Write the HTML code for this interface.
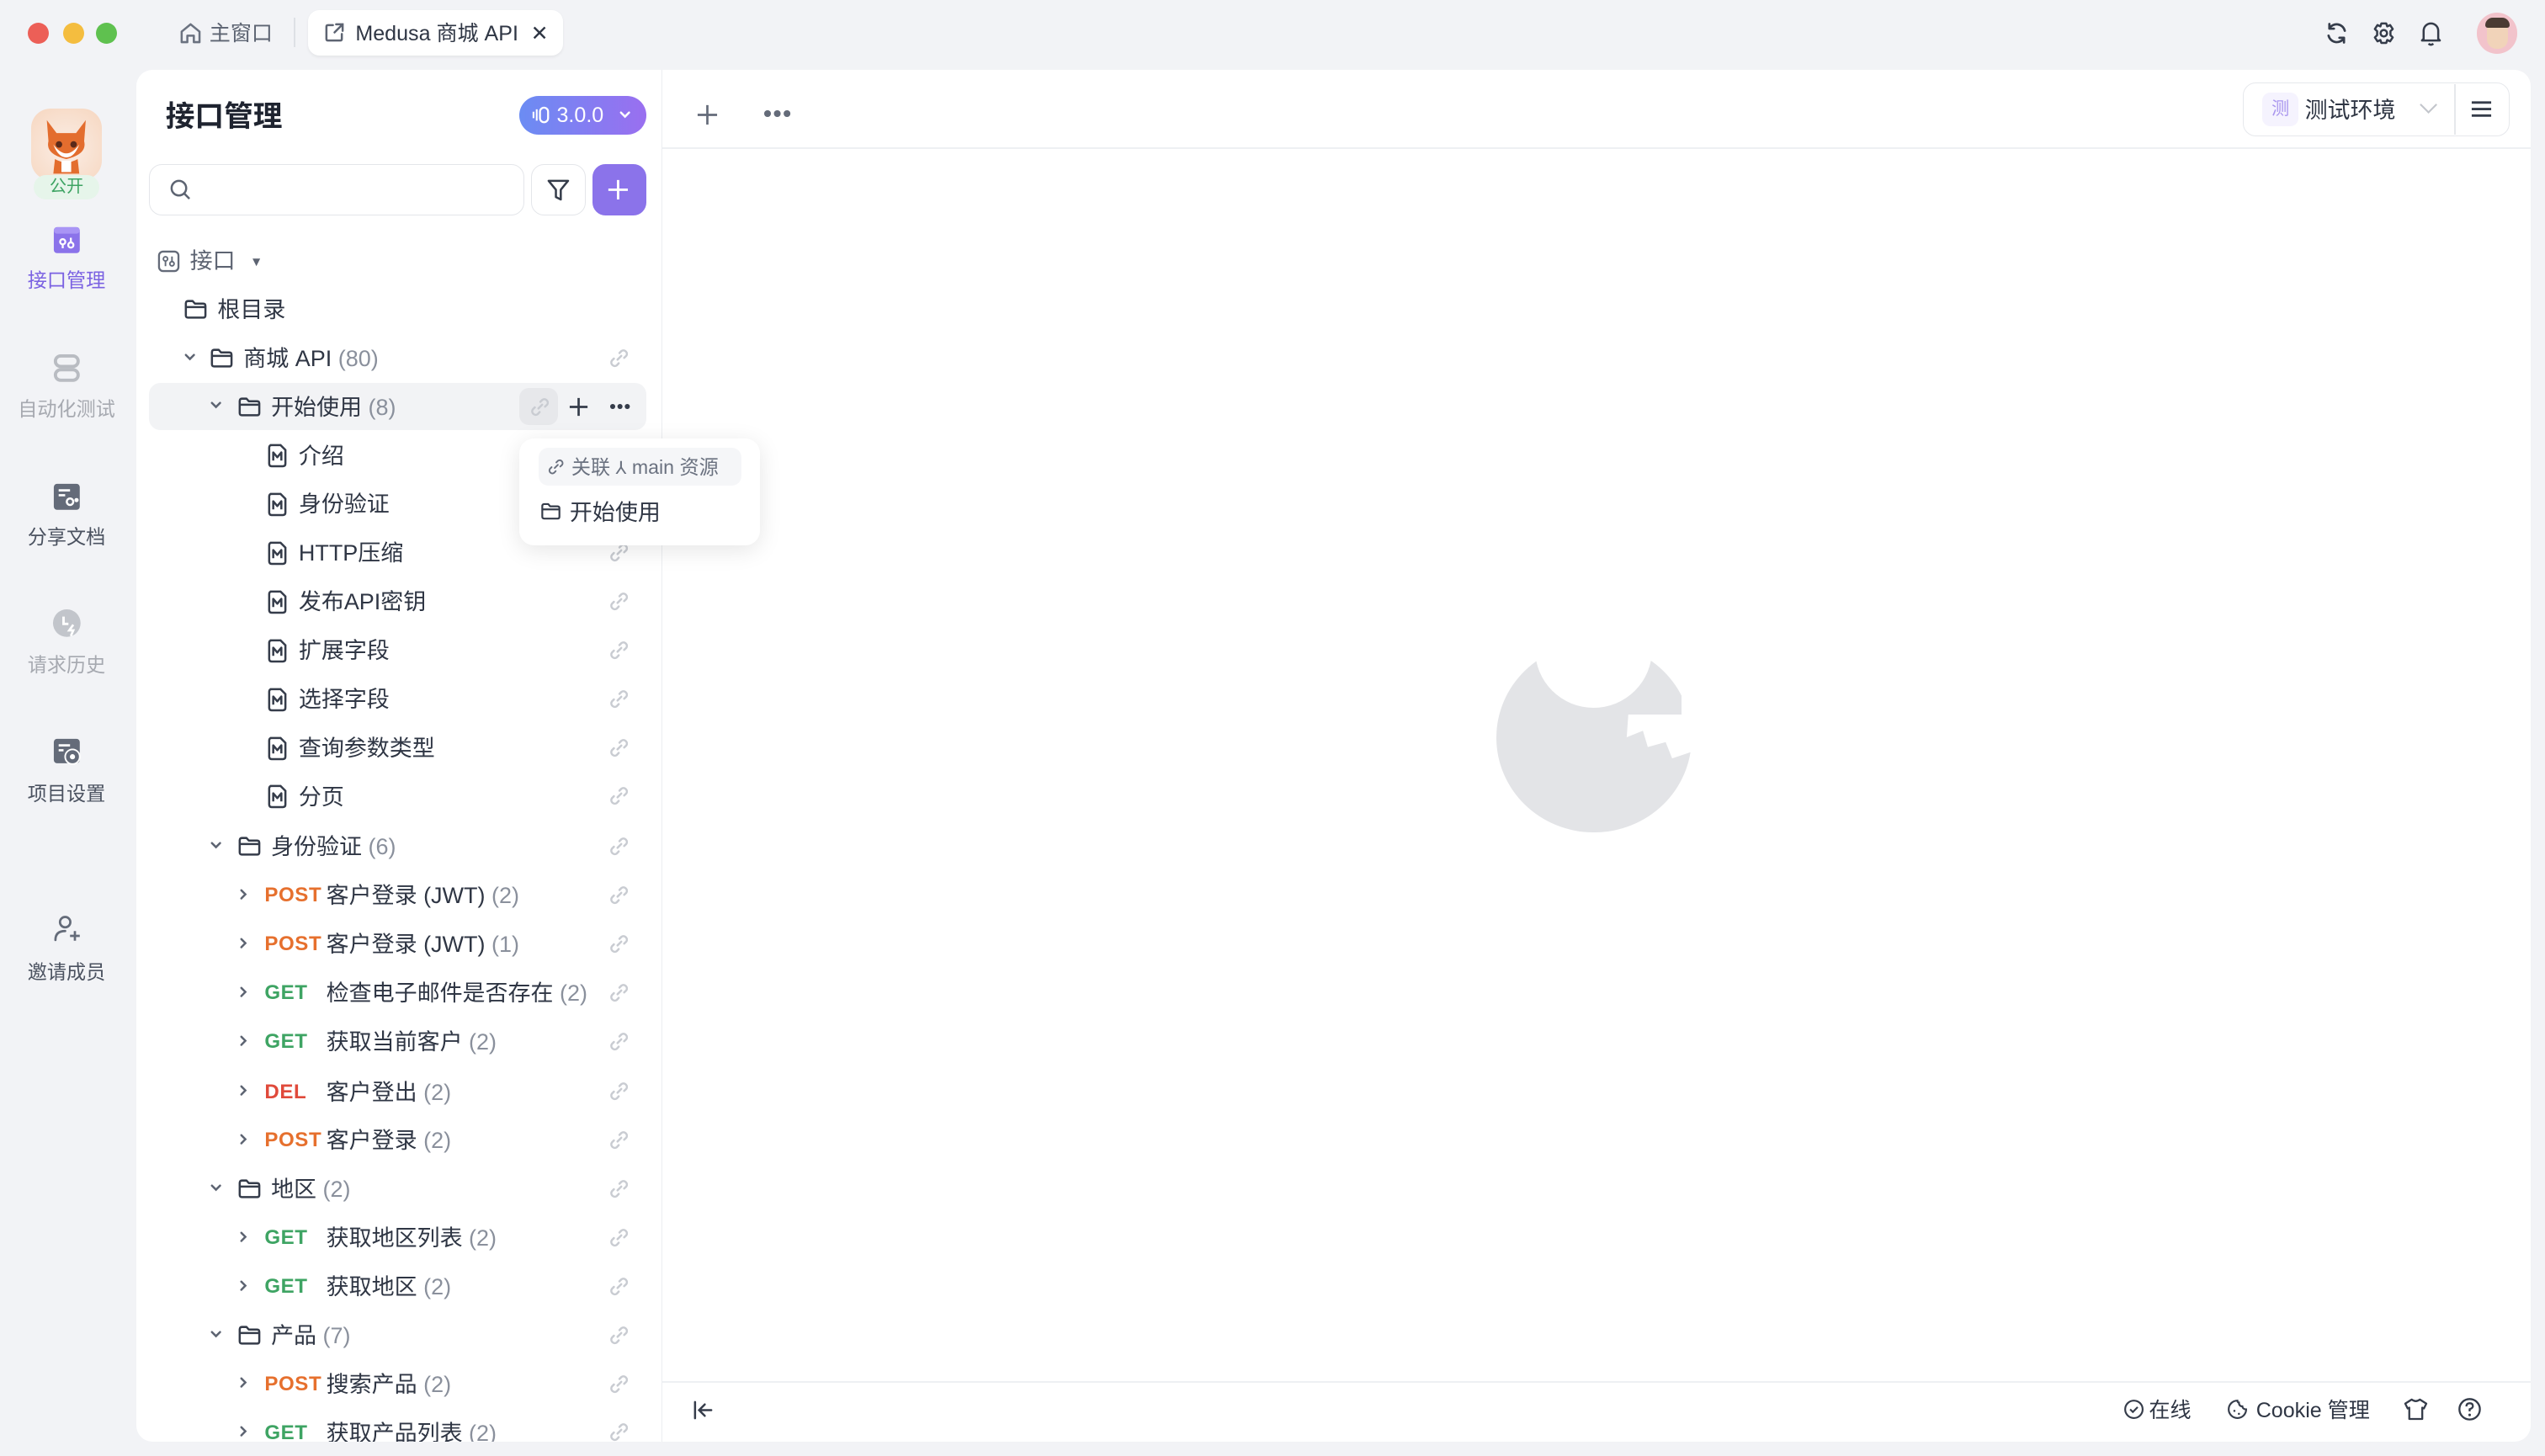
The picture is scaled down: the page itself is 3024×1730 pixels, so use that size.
<!DOCTYPE html>
<html><head><meta charset="utf-8">
<style>
*{margin:0;padding:0;box-sizing:border-box}
html,body{width:3024px;height:1730px;overflow:hidden;background:#f2f3f6}
#w{width:1568px;height:897px;position:relative;zoom:1.928571;background:#f2f3f6;font-family:"Liberation Sans","Noto Sans CJK SC",sans-serif;color:#353c4a;overflow:hidden}
.a{position:absolute}
.t{position:absolute;white-space:nowrap;font-size:14px;line-height:20px;color:#2f3644}
.c{color:#8a909c}
.m{position:absolute;font-size:12.5px;font-weight:bold;line-height:20px;letter-spacing:.3px}
.post{color:#e6702e}.get{color:#3ea463}.del{color:#e04a3b}
svg{position:absolute;overflow:visible}
</style></head><body><div id="w">
<svg width="0" height="0" style="position:absolute">
<defs>
<symbol id="lk" viewBox="0 0 14 14"><g fill="none" stroke="#c9ccd2" stroke-width="1.4" stroke-linecap="round"><path d="M6 8 L8.5 5.5"/><path d="M7.3 3.6 L8.6 2.3 a2.3 2.3 0 0 1 3.2 3.2 L10.4 6.8"/><path d="M3.6 7.3 L2.3 8.6 a2.3 2.3 0 0 0 3.2 3.2 L6.8 10.4"/></g></symbol>
<symbol id="lk2" viewBox="0 0 14 14"><g fill="none" stroke="#6b7280" stroke-width="1.3" stroke-linecap="round"><path d="M6 8 L8.5 5.5"/><path d="M7.3 3.6 L8.6 2.3 a2.3 2.3 0 0 1 3.2 3.2 L10.4 6.8"/><path d="M3.6 7.3 L2.3 8.6 a2.3 2.3 0 0 0 3.2 3.2 L6.8 10.4"/></g></symbol>
<symbol id="fd" viewBox="0 0 16 14"><path d="M1.5 3 Q1.5 1.5 3 1.5 H6 L7.5 3.2 H13 Q14.5 3.2 14.5 4.7 V11 Q14.5 12.5 13 12.5 H3 Q1.5 12.5 1.5 11 Z M1.5 5.5 H14.5" fill="none" stroke="#353c4a" stroke-width="1.4" stroke-linejoin="round"/></symbol>
<symbol id="dc" viewBox="0 0 14 16"><path d="M2.5 1.5 H9 L12 4.5 V13 Q12 14.5 10.5 14.5 H3.5 Q2 14.5 2 13 V3 Q2 1.5 3.5 1.5Z" fill="none" stroke="#353c4a" stroke-width="1.3"/><path d="M4.5 11 V6 L7 9 L9.5 6 V11" fill="none" stroke="#353c4a" stroke-width="1.3" stroke-linejoin="round"/></symbol>
<symbol id="cd" viewBox="0 0 10 10"><path d="M2.5 3.5 L5 6 L7.5 3.5" fill="none" stroke="#5d6472" stroke-width="1.3" stroke-linecap="round"/></symbol>
<symbol id="cr" viewBox="0 0 10 10"><path d="M3.5 2.5 L6 5 L3.5 7.5" fill="none" stroke="#5d6472" stroke-width="1.3" stroke-linecap="round"/></symbol>
</defs></svg>

<!-- titlebar -->
<div class="a" style="left:17px;top:14px;width:13px;height:13px;border-radius:50%;background:#ec5f57"></div>
<div class="a" style="left:39px;top:14px;width:13px;height:13px;border-radius:50%;background:#f4bd3f"></div>
<div class="a" style="left:59px;top:14px;width:13px;height:13px;border-radius:50%;background:#5fc14f"></div>
<svg style="left:110px;top:13px" width="15" height="15" viewBox="0 0 15 15"><path d="M2 6.5 L7.5 2 L13 6.5 V13 H9.5 V9 H5.5 V13 H2Z" fill="none" stroke="#6b7280" stroke-width="1.3" stroke-linejoin="round"/></svg>
<div class="t" style="left:129px;top:11px;font-size:13px;color:#5d6472">主窗口</div>
<div class="a" style="left:181px;top:11px;width:1px;height:18px;background:#dde0e5"></div>
<div class="a" style="left:190px;top:6px;width:157px;height:28px;background:#fff;border-radius:7px;box-shadow:0 1px 2px rgba(0,0,0,.06)"></div>
<svg style="left:199px;top:13px" width="14" height="14" viewBox="0 0 14 14"><path d="M6 2.5 H3 Q2 2.5 2 3.5 V11 Q2 12 3 12 H10.5 Q11.5 12 11.5 11 V8 M8 2 H12 V6 M12 2 L7 7" fill="none" stroke="#5d6472" stroke-width="1.3" stroke-linecap="round"/></svg>
<div class="t" style="left:219px;top:11px;font-size:13px;color:#2f3644">Medusa 商城 API</div>
<div class="t" style="left:327px;top:11px;font-size:13px">✕</div>
<svg style="left:1432px;top:13px" width="15" height="15" viewBox="0 0 15 15"><path d="M12.5 6 A5.2 5.2 0 0 0 3 4.5 M2.5 9 A5.2 5.2 0 0 0 12 10.5 M3 1.8 V4.7 H5.8 M12 13.2 V10.3 H9.2" fill="none" stroke="#353c4a" stroke-width="1.4" stroke-linecap="round" stroke-linejoin="round"/></svg>
<svg style="left:1461px;top:13px" width="15" height="15" viewBox="0 0 15 15"><path d="M6 1.5 H9 L9.6 3.3 L11.4 2.5 L13 4.9 L11.6 6.3 L11.6 8.7 L13 10.1 L11.4 12.5 L9.6 11.7 L9 13.5 H6 L5.4 11.7 L3.6 12.5 L2 10.1 L3.4 8.7 V6.3 L2 4.9 L3.6 2.5 L5.4 3.3Z" fill="none" stroke="#353c4a" stroke-width="1.3" stroke-linejoin="round"/><circle cx="7.5" cy="7.5" r="2" fill="none" stroke="#353c4a" stroke-width="1.3"/></svg>
<svg style="left:1490px;top:12px" width="15" height="17" viewBox="0 0 15 17"><path d="M3 12 V7 A4.5 4.5 0 0 1 12 7 V12 L13 13 H2Z M6 15 Q7.5 16.3 9 15" fill="none" stroke="#353c4a" stroke-width="1.3" stroke-linejoin="round"/></svg>
<div class="a" style="left:1526px;top:8px;width:25px;height:25px;border-radius:50%;background:#f2c3cb;overflow:hidden"><div class="a" style="left:6px;top:5px;width:13px;height:17px;border-radius:6px;background:#f1d3b9"></div><div class="a" style="left:5px;top:3px;width:15px;height:6px;border-radius:6px 6px 2px 2px;background:#4a3b33"></div></div>

<!-- left nav -->
<div class="a" style="left:19px;top:67px;width:44px;height:44px;border-radius:12px;background:radial-gradient(circle at 50% 55%,#fbeee6,#f6d6bf)"></div>
<svg style="left:24px;top:70px" width="34" height="38" viewBox="0 0 34 38"><path d="M5 4 L11 12 L23 12 L29 4 L28 17 Q30 25 17 28 Q4 25 6 17Z" fill="#e36d2e"/><path d="M9 19 Q17 30 25 19 Q22 27 17 27 Q12 27 9 19Z" fill="#fff"/><circle cx="12.5" cy="19" r="2" fill="#5a2a1a"/><circle cx="21.5" cy="19" r="2" fill="#5a2a1a"/><path d="M10 28 Q17 32 24 28 L25 37 H9Z" fill="#e36d2e"/><path d="M14 29 H20 V36 H14Z" fill="#fff"/></svg>
<div class="a" style="left:21px;top:108px;width:40px;height:15px;border-radius:8px;background:#e6f5ea;color:#3ea463;font-size:10.5px;line-height:15px;text-align:center">公开</div>
<svg style="left:32px;top:139px" width="18" height="18" viewBox="0 0 18 18"><rect x="1" y="1" width="16" height="16" rx="2" fill="#8b73ea"/><rect x="1" y="1" width="16" height="4" rx="2" fill="#a995f5"/><circle cx="6.5" cy="10" r="1.6" fill="none" stroke="#fff" stroke-width="1.2"/><circle cx="11.5" cy="12" r="1.6" fill="none" stroke="#fff" stroke-width="1.2"/><path d="M6.5 11.6 V14 M11.5 7.5 V10.4" stroke="#fff" stroke-width="1.2"/></svg>
<div class="t" style="left:17px;top:163px;font-size:12px;color:#7b62e2">接口管理</div>
<svg style="left:32px;top:218px" width="18" height="18" viewBox="0 0 18 18"><rect x="2" y="1.5" width="14" height="6.5" rx="3.2" fill="none" stroke="#b9bcc2" stroke-width="2"/><rect x="2" y="10" width="14" height="6.5" rx="3.2" fill="none" stroke="#b9bcc2" stroke-width="2"/></svg>
<div class="t" style="left:11px;top:242px;font-size:12px;color:#a6a9b0">自动化测试</div>
<svg style="left:32px;top:297px" width="18" height="18" viewBox="0 0 18 18"><rect x="1" y="1" width="16" height="16" rx="2" fill="#646b79"/><path d="M4 5 H11 M4 8 H8" stroke="#fff" stroke-width="1.4"/><circle cx="11" cy="12" r="2" fill="none" stroke="#fff" stroke-width="1.3"/><circle cx="15" cy="11" r="1.3" fill="#fff"/></svg>
<div class="t" style="left:17px;top:321px;font-size:12px;color:#4b5260">分享文档</div>
<svg style="left:32px;top:375px" width="18" height="18" viewBox="0 0 18 18"><circle cx="9" cy="9" r="8.5" fill="#c2c5cb"/><path d="M7 5 V9.5 H10" stroke="#fff" stroke-width="1.5" fill="none"/><path d="M13 10 L10.5 13.5 H13 L11.5 17" stroke="#fff" stroke-width="1.4" fill="none"/></svg>
<div class="t" style="left:17px;top:400px;font-size:12px;color:#a6a9b0">请求历史</div>
<svg style="left:32px;top:454px" width="19" height="18" viewBox="0 0 19 18"><rect x="1" y="1" width="16" height="15" rx="2" fill="#646b79"/><path d="M4 5 H11 M4 8 H7" stroke="#fff" stroke-width="1.4"/><circle cx="12.5" cy="12" r="4.5" fill="#646b79" stroke="#fff" stroke-width="1"/><circle cx="12.5" cy="12" r="1.6" fill="#fff"/></svg>
<div class="t" style="left:17px;top:479px;font-size:12px;color:#4b5260">项目设置</div>
<svg style="left:32px;top:563px" width="18" height="18" viewBox="0 0 18 18"><circle cx="8" cy="5" r="3.2" fill="none" stroke="#646b79" stroke-width="1.4"/><path d="M2 16 Q2 10.5 8 10.5" fill="none" stroke="#646b79" stroke-width="1.4" stroke-linecap="round"/><path d="M11 13.5 H17 M14 10.5 V16.5" stroke="#646b79" stroke-width="1.4"/></svg>
<div class="t" style="left:17px;top:589px;font-size:12px;color:#4b5260">邀请成员</div>

<!-- tree panel -->
<div class="a" style="left:84px;top:43px;width:324px;height:845px;background:#fff;border-radius:10px 0 0 10px;border-right:1px solid #eceef1"></div>
<div class="t" style="left:102px;top:59px;font-size:18px;line-height:26px;font-weight:bold;color:#1f2430">接口管理</div>
<div class="a" style="left:320px;top:59px;width:78px;height:24px;border-radius:12px;background:linear-gradient(90deg,#6b8cf3,#9a6ff0)"></div>
<svg style="left:327px;top:65px" width="12" height="12" viewBox="0 0 12 12"><path d="M1.5 4 V8 M3.5 2.5 V9.5" stroke="#fff" stroke-width="1.1"/><rect x="5.5" y="1.5" width="5" height="9" rx="2.5" fill="none" stroke="#fff" stroke-width="1.2"/></svg>
<div class="t" style="left:343px;top:61px;font-size:13px;color:#fff">3.0.0</div>
<svg style="left:380px;top:66px" width="10" height="10" viewBox="0 0 10 10"><path d="M2.5 3.5 L5 6 L7.5 3.5" fill="none" stroke="#fff" stroke-width="1.3" stroke-linecap="round"/></svg>
<div class="a" style="left:92px;top:101px;width:231px;height:32px;border:1px solid #e4e6ea;border-radius:8px"></div>
<svg style="left:104px;top:110px" width="14" height="14" viewBox="0 0 14 14"><circle cx="6" cy="6" r="4.5" fill="none" stroke="#5d6472" stroke-width="1.3"/><path d="M9.5 9.5 L12.5 12.5" stroke="#5d6472" stroke-width="1.3"/></svg>
<div class="a" style="left:327px;top:101px;width:34px;height:32px;border:1px solid #e4e6ea;border-radius:8px"></div>
<svg style="left:336px;top:109px" width="16" height="16" viewBox="0 0 16 16"><path d="M2 2.5 H14 L9.5 8 V14 L6.5 12.5 V8Z" fill="none" stroke="#353c4a" stroke-width="1.3" stroke-linejoin="round"/></svg>
<div class="a" style="left:365px;top:101px;width:33px;height:32px;border-radius:8px;background:#8b73ea"></div>
<svg style="left:373px;top:109px" width="16" height="16" viewBox="0 0 16 16"><path d="M8 2 V14 M2 8 H14" stroke="#fff" stroke-width="1.5"/></svg>

<svg style="left:97px;top:154px" width="14" height="14" viewBox="0 0 14 14"><rect x="1" y="1" width="12" height="12" rx="2.5" fill="none" stroke="#646b79" stroke-width="1.2"/><circle cx="5" cy="5.5" r="1.3" fill="none" stroke="#646b79" stroke-width="1"/><circle cx="9" cy="8.5" r="1.3" fill="none" stroke="#646b79" stroke-width="1"/><path d="M5 7 V10 M9 4 V7" stroke="#646b79" stroke-width="1"/></svg>
<div class="t" style="left:117px;top:151px;color:#5d6472">接口</div>
<div class="t" style="left:154px;top:152px;font-size:8px;color:#5d6472">▼</div>

<div class="a" style="left:92px;top:236px;width:306px;height:29px;border-radius:7px;background:#f2f3f5"></div>
<div class="a" style="left:320px;top:239px;width:24px;height:23px;border-radius:6px;background:#e7e8eb"></div>

<!-- main panel -->
<div class="a" style="left:408px;top:43px;width:1151px;height:845px;background:#fff;border-radius:0 10px 10px 0"></div>
<div class="a" style="left:408px;top:91px;width:1151px;height:1px;background:#eef0f3"></div>
<div class="a" style="left:408px;top:851px;width:1151px;height:1px;background:#eef0f3"></div>
<svg style="left:429px;top:64px" width="14" height="14" viewBox="0 0 14 14"><path d="M7 1 V13 M1 7 H13" stroke="#646b79" stroke-width="1.4"/></svg>
<div class="a" style="left:471px;top:68px;width:4px;height:4px;border-radius:50%;background:#646b79;box-shadow:6px 0 #646b79,12px 0 #646b79"></div>
<div class="a" style="left:1382px;top:51px;width:164px;height:33px;border:1px solid #e6e8ec;border-radius:8px"></div>
<div class="a" style="left:1512px;top:52px;width:1px;height:31px;background:#e6e8ec"></div>
<div class="a" style="left:1394px;top:57px;width:22px;height:21px;border-radius:5px;background:#f5f3fe;color:#a996ee;font-size:11px;line-height:21px;text-align:center">测</div>
<div class="t" style="left:1420px;top:58px;font-size:14px;color:#2f3644">测试环境</div>
<svg style="left:1490px;top:62px" width="12" height="10" viewBox="0 0 12 10"><path d="M1 2 L6 7 L11 2" fill="none" stroke="#c3c6cc" stroke-width="1.1"/></svg>
<svg style="left:1522px;top:61px" width="14" height="12" viewBox="0 0 14 12"><path d="M1 2 H13 M1 6 H13 M1 10 H13" stroke="#353c4a" stroke-width="1.5"/></svg>

<!-- center logo -->
<div class="a" style="left:922px;top:396px;width:120px;height:117px;border-radius:50%;background:#e3e4e7"></div>
<div class="a" style="left:946px;top:364px;width:72px;height:72px;border-radius:50%;background:#fff"></div>
<svg style="left:1000px;top:440px" width="45" height="40" viewBox="0 0 45 40"><path d="M3 0 L2 14 L12 10 L15 20 L26 17 L30 27 L45 22 L45 0Z" fill="#fff"/><path d="M5 2 L8 6 L18 4 L22 12 L33 10 L38 18 L45 16" fill="none" stroke="#fff" stroke-width="0"/></svg>
<div class="a" style="left:1036px;top:420px;width:10px;height:20px;background:#fff"></div>

<svg style="left:426px;top:862px" width="14" height="14" viewBox="0 0 14 14"><path d="M2 2 V12 M12 7 H5 M8 3.5 L4.5 7 L8 10.5" fill="none" stroke="#353c4a" stroke-width="1.3" stroke-linecap="round"/></svg>
<svg style="left:1308px;top:862px" width="13" height="13" viewBox="0 0 14 14"><circle cx="7" cy="7" r="5.8" fill="none" stroke="#353c4a" stroke-width="1.2"/><path d="M4.5 7 L6.3 8.8 L9.5 5.5" fill="none" stroke="#353c4a" stroke-width="1.2"/></svg>
<div class="t" style="left:1324px;top:859px;font-size:13px">在线</div>
<svg style="left:1372px;top:862px" width="13" height="13" viewBox="0 0 14 14"><path d="M7 1.2 A5.8 5.8 0 1 0 12.8 7 Q10.5 7 10.3 5 Q8 5 8 2.5 Q7 2.5 7 1.2Z" fill="none" stroke="#353c4a" stroke-width="1.2"/><circle cx="5" cy="8" r=".7" fill="#353c4a"/><circle cx="8" cy="10" r=".7" fill="#353c4a"/></svg>
<div class="t" style="left:1390px;top:859px;font-size:13px">Cookie 管理</div>
<svg style="left:1481px;top:861px" width="15" height="15" viewBox="0 0 15 15"><path d="M5 1.5 Q7.5 3.5 10 1.5 L14 4 L12.5 7 L11.5 6.5 V13.5 H3.5 V6.5 L2.5 7 L1 4Z" fill="none" stroke="#353c4a" stroke-width="1.2" stroke-linejoin="round"/></svg>
<svg style="left:1514px;top:861px" width="15" height="15" viewBox="0 0 15 15"><circle cx="7.5" cy="7.5" r="6.3" fill="none" stroke="#353c4a" stroke-width="1.2"/><path d="M5.5 5.8 Q5.5 3.8 7.5 3.8 Q9.5 3.8 9.5 5.6 Q9.5 6.8 7.5 7.5 V8.8" fill="none" stroke="#353c4a" stroke-width="1.2"/><circle cx="7.5" cy="11" r=".8" fill="#353c4a"/></svg>

<!-- rows -->
<svg style="left:113px;top:184px" width="15" height="13"><use href="#fd"/></svg><div class="t" style="left:134px;top:181px">根目录</div>

<svg style="left:112px;top:215px" width="10" height="10"><use href="#cd"/></svg><svg style="left:129px;top:214px" width="15" height="13"><use href="#fd"/></svg><div class="t" style="left:150px;top:211px">商城 API <span class="c">(80)</span></div><svg style="left:375px;top:214px" width="13" height="13"><use href="#lk"/></svg>

<svg style="left:128px;top:245px" width="10" height="10"><use href="#cd"/></svg><svg style="left:146px;top:244px" width="15" height="13"><use href="#fd"/></svg><div class="t" style="left:167px;top:241px">开始使用 <span class="c">(8)</span></div><svg style="left:326px;top:244px" width="13" height="13"><use href="#lk"/></svg>
<svg style="left:350px;top:244px" width="13" height="13" viewBox="0 0 13 13"><path d="M6.5 1 V12 M1 6.5 H12" stroke="#353c4a" stroke-width="1.4"/></svg>
<div class="a" style="left:376px;top:249px;width:3px;height:3px;border-radius:50%;background:#353c4a;box-shadow:4.5px 0 #353c4a,9px 0 #353c4a"></div>

<svg style="left:164px;top:273px" width="14" height="16"><use href="#dc"/></svg><div class="t" style="left:184px;top:271px">介绍</div>
<svg style="left:164px;top:303px" width="14" height="16"><use href="#dc"/></svg><div class="t" style="left:184px;top:301px">身份验证</div>
<svg style="left:164px;top:333px" width="14" height="16"><use href="#dc"/></svg><div class="t" style="left:184px;top:331px">HTTP压缩</div><svg style="left:375px;top:334px" width="13" height="13"><use href="#lk"/></svg>
<svg style="left:164px;top:363px" width="14" height="16"><use href="#dc"/></svg><div class="t" style="left:184px;top:361px">发布API密钥</div><svg style="left:375px;top:364px" width="13" height="13"><use href="#lk"/></svg>
<svg style="left:164px;top:393px" width="14" height="16"><use href="#dc"/></svg><div class="t" style="left:184px;top:391px">扩展字段</div><svg style="left:375px;top:394px" width="13" height="13"><use href="#lk"/></svg>
<svg style="left:164px;top:423px" width="14" height="16"><use href="#dc"/></svg><div class="t" style="left:184px;top:421px">选择字段</div><svg style="left:375px;top:424px" width="13" height="13"><use href="#lk"/></svg>
<svg style="left:164px;top:453px" width="14" height="16"><use href="#dc"/></svg><div class="t" style="left:184px;top:451px">查询参数类型</div><svg style="left:375px;top:454px" width="13" height="13"><use href="#lk"/></svg>
<svg style="left:164px;top:483px" width="14" height="16"><use href="#dc"/></svg><div class="t" style="left:184px;top:481px">分页</div><svg style="left:375px;top:484px" width="13" height="13"><use href="#lk"/></svg>

<svg style="left:128px;top:516px" width="10" height="10"><use href="#cd"/></svg><svg style="left:146px;top:515px" width="15" height="13"><use href="#fd"/></svg><div class="t" style="left:167px;top:512px">身份验证 <span class="c">(6)</span></div><svg style="left:375px;top:515px" width="13" height="13"><use href="#lk"/></svg>

<svg style="left:145px;top:546px" width="10" height="10"><use href="#cr"/></svg><div class="m post" style="left:163px;top:542px">POST</div><div class="t" style="left:201px;top:542px">客户登录 (JWT) <span class="c">(2)</span></div><svg style="left:375px;top:545px" width="13" height="13"><use href="#lk"/></svg>
<svg style="left:145px;top:576px" width="10" height="10"><use href="#cr"/></svg><div class="m post" style="left:163px;top:572px">POST</div><div class="t" style="left:201px;top:572px">客户登录 (JWT) <span class="c">(1)</span></div><svg style="left:375px;top:575px" width="13" height="13"><use href="#lk"/></svg>
<svg style="left:145px;top:606px" width="10" height="10"><use href="#cr"/></svg><div class="m get" style="left:163px;top:602px">GET</div><div class="t" style="left:201px;top:602px">检查电子邮件是否存在 <span class="c">(2)</span></div><svg style="left:375px;top:605px" width="13" height="13"><use href="#lk"/></svg>
<svg style="left:145px;top:636px" width="10" height="10"><use href="#cr"/></svg><div class="m get" style="left:163px;top:632px">GET</div><div class="t" style="left:201px;top:632px">获取当前客户 <span class="c">(2)</span></div><svg style="left:375px;top:635px" width="13" height="13"><use href="#lk"/></svg>
<svg style="left:145px;top:667px" width="10" height="10"><use href="#cr"/></svg><div class="m del" style="left:163px;top:663px">DEL</div><div class="t" style="left:201px;top:663px">客户登出 <span class="c">(2)</span></div><svg style="left:375px;top:666px" width="13" height="13"><use href="#lk"/></svg>
<svg style="left:145px;top:697px" width="10" height="10"><use href="#cr"/></svg><div class="m post" style="left:163px;top:693px">POST</div><div class="t" style="left:201px;top:693px">客户登录 <span class="c">(2)</span></div><svg style="left:375px;top:696px" width="13" height="13"><use href="#lk"/></svg>

<svg style="left:128px;top:727px" width="10" height="10"><use href="#cd"/></svg><svg style="left:146px;top:726px" width="15" height="13"><use href="#fd"/></svg><div class="t" style="left:167px;top:723px">地区 <span class="c">(2)</span></div><svg style="left:375px;top:726px" width="13" height="13"><use href="#lk"/></svg>
<svg style="left:145px;top:757px" width="10" height="10"><use href="#cr"/></svg><div class="m get" style="left:163px;top:753px">GET</div><div class="t" style="left:201px;top:753px">获取地区列表 <span class="c">(2)</span></div><svg style="left:375px;top:756px" width="13" height="13"><use href="#lk"/></svg>
<svg style="left:145px;top:787px" width="10" height="10"><use href="#cr"/></svg><div class="m get" style="left:163px;top:783px">GET</div><div class="t" style="left:201px;top:783px">获取地区 <span class="c">(2)</span></div><svg style="left:375px;top:786px" width="13" height="13"><use href="#lk"/></svg>

<svg style="left:128px;top:817px" width="10" height="10"><use href="#cd"/></svg><svg style="left:146px;top:816px" width="15" height="13"><use href="#fd"/></svg><div class="t" style="left:167px;top:813px">产品 <span class="c">(7)</span></div><svg style="left:375px;top:816px" width="13" height="13"><use href="#lk"/></svg>
<svg style="left:145px;top:847px" width="10" height="10"><use href="#cr"/></svg><div class="m post" style="left:163px;top:843px">POST</div><div class="t" style="left:201px;top:843px">搜索产品 <span class="c">(2)</span></div><svg style="left:375px;top:846px" width="13" height="13"><use href="#lk"/></svg>
<svg style="left:145px;top:877px" width="10" height="10"><use href="#cr"/></svg><div class="m get" style="left:163px;top:873px">GET</div><div class="t" style="left:201px;top:873px">获取产品列表 <span class="c">(2)</span></div><svg style="left:375px;top:876px" width="13" height="13"><use href="#lk"/></svg>
<div class="a" style="left:84px;top:888px;width:1484px;height:9px;background:#f2f3f6"></div>

<!-- popup (on top) -->
<div class="a" style="left:320px;top:270px;width:148px;height:66px;background:#fff;border-radius:9px;box-shadow:0 3px 14px rgba(0,0,0,.1)"></div>
<div class="a" style="left:332px;top:276px;width:125px;height:23px;border-radius:6px;background:#f5f6f8"></div>
<svg style="left:337px;top:282px" width="11" height="11"><use href="#lk2"/></svg>
<div class="t" style="left:352px;top:278px;font-size:12px;color:#6b7280">关联 <span style="font-size:11px">⅄</span> main 资源</div>
<svg style="left:333px;top:309px" width="13" height="12"><use href="#fd"/></svg>
<div class="t" style="left:351px;top:306px">开始使用</div>
</div></body></html>
